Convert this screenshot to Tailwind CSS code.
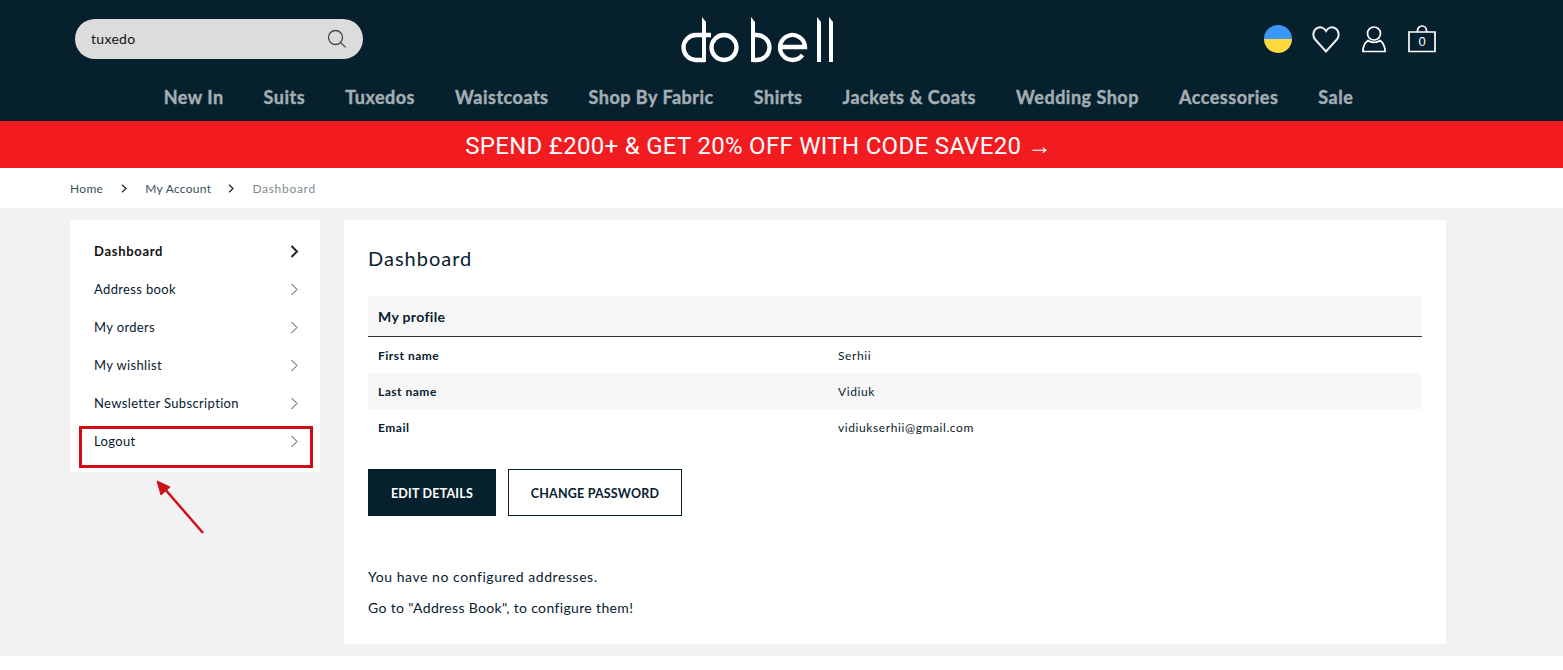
<!DOCTYPE html>
<html lang="en">
<head>
  <meta charset="UTF-8" />
  <meta name="viewport" content="width=device-width, initial-scale=1.0" />
  <title>Dashboard - Dobell</title>
  <script src="https://cdn.jsdelivr.net/npm/@tailwindcss/browser@4"></script>
</head>
<body class="bg-white text-[#07202e] font-['Lato',sans-serif] overflow-hidden">
  <div class="relative h-[670px]">
    <!-- header -->
    <header class="bg-[#07202e] h-[121px] relative">
      <div class="flex items-start justify-between pl-[75px] pr-[127px] pt-[19px] h-[86px]">
        <div class="w-[288px] h-10 rounded-full bg-[#dcdcdc] flex items-center justify-between pl-4 pr-4">
          <span class="text-[14px] leading-[18px] text-[#111] tracking-[0.3px]">tuxedo</span>
          <svg class="w-[20px] h-[20px]" viewBox="0 0 20 20" fill="none" stroke="#444" stroke-width="1.3"><circle cx="8.5" cy="8.5" r="7"/><path d="M13.6 13.6 18.6 18.4"/></svg>
        </div>
        <div class="flex items-center gap-5 h-10">
          <div class="w-7 h-7 rounded-full overflow-hidden flex flex-col">
            <div class="h-[14px] bg-[#3b97f7]"></div>
            <div class="h-[14px] bg-[#ffd83d]"></div>
          </div>
          <svg class="w-7 h-7" viewBox="0 0 28 28" fill="none" stroke="#eef1f2" stroke-width="2"><path d="M14 26.5 3.2 14.5C.2 11 1 5.5 5 3.2c3.3-1.8 7-.6 9 2.8 2-3.4 5.700-4.600 9-2.800 4 2.300 4.800 7.800 1.800 11.300Z"/></svg>
          <svg class="w-7 h-7" viewBox="0 0 24 28" fill="none" stroke="#fff" stroke-width="1.700"><circle cx="12" cy="8.500" r="6.500"/><path d="M6 15.500C3 17.500 1 22 .9 26.500h22.200C23 22 21 17.500 18 15.500c-3 2.500-9 2.500-12 0Z"/></svg>
          <div class="relative w-7 h-7">
            <svg class="w-7 h-7" viewBox="0 0 28 28" fill="none" stroke="#fff" stroke-width="1.700"><path d="M1 7h26v19.500H1Z"/><path d="M9.500 7V5.500a4.500 4.500 0 0 1 9 0V7"/></svg>
            <span class="absolute inset-0 pt-[9px] text-center text-[13px] leading-[16px] text-white font-['Liberation_Sans',sans-serif]">0</span>
          </div>
        </div>
      </div>
      <svg class="absolute left-[660px] top-0 w-[200px] h-[80px]" viewBox="660 0 200 80" fill="none" stroke="#fff" stroke-width="4.300">
        <path d="M711 35H696a12.500 12.500 0 0 0 0 25H705"/>
        <path d="M702 17 706 22V62H702Z" fill="#fff" stroke="none"/>
        <circle cx="724" cy="47.500" r="12.500"/>
        <path d="M751 17 755 22V62H751Z" fill="#fff" stroke="none"/>
        <path d="M753 35H757a12.500 12.500 0 0 1 0 25H753"/>
        <path d="M780 47h25a12.500 12.500 0 1 0-2.500 8"/>
        <path d="M817 17 821 22V62H817Z" fill="#fff" stroke="none"/>
        <path d="M829 17 833 22V62H829Z" fill="#fff" stroke="none"/>
      </svg>
      <nav class="flex justify-center gap-10 pr-[46px] text-[18px] leading-[22px] font-bold tracking-[0.5px] text-[#a3aeb3] [-webkit-text-stroke:0.4px_#a3aeb3]">
        <a>New In</a>
        <a>Suits</a>
        <a>Tuxedos</a>
        <a>Waistcoats</a>
        <a>Shop By Fabric</a>
        <a>Shirts</a>
        <a>Jackets &amp; Coats</a>
        <a>Wedding Shop</a>
        <a>Accessories</a>
        <a>Sale</a>
      </nav>
    </header>

    <!-- promo banner -->
    <div class="bg-[#f21c20] h-[47px] pt-[2px] flex items-center justify-center pr-[46px] text-white text-[24px] tracking-[0.3px] font-['Roboto',sans-serif]">SPEND £200+ &amp; GET 20% OFF WITH CODE SAVE20 →</div>

    <!-- breadcrumb -->
    <div class="h-10 flex items-center pl-[70px] text-[12px] tracking-[0.3px] text-[#3c4f5a]">
      <span class="pt-[2px]">Home</span>
      <svg class="w-[6px] h-[9px] ml-[18px] mr-[18px]" viewBox="0 0 6 9" fill="none" stroke="#222" stroke-width="1.200"><path d="M1 .8 5 4.500 1 8.200"/></svg>
      <span class="pt-[2px]">My Account</span>
      <svg class="w-[6px] h-[9px] ml-[17px] mr-[18px]" viewBox="0 0 6 9" fill="none" stroke="#222" stroke-width="1.200"><path d="M1 .8 5 4.500 1 8.200"/></svg>
      <span class="pt-[2px] tracking-[0.7px] text-[#7f8a90]">Dashboard</span>
    </div>

    <!-- account area -->
    <main class="bg-[#f2f2f2] h-[448px] pt-3 pl-[70px] flex items-start gap-6">
      <aside class="bg-white w-[250px] h-[252px] pt-3 pl-6 pr-[21px] text-[13px] tracking-[0.35px]">
        <a class="h-[38px] flex items-center justify-between font-bold tracking-[0.7px] text-[#111]"><span class="pt-[2px]">Dashboard</span>
          <svg class="w-[9px] h-[13px]" viewBox="0 0 9 13" fill="none" stroke="#222" stroke-width="2"><path d="M1.500 1 7 6.500 1.500 12"/></svg>
        </a>
        <a class="h-[38px] flex items-center justify-between"><span class="pt-[2px]">Address book</span>
          <svg class="w-[9px] h-[13px]" viewBox="0 0 9 13" fill="none" stroke="#444" stroke-width="1"><path d="M1.500 1 7 6.500 1.500 12"/></svg>
        </a>
        <a class="h-[38px] flex items-center justify-between"><span class="pt-[2px]">My orders</span>
          <svg class="w-[9px] h-[13px]" viewBox="0 0 9 13" fill="none" stroke="#444" stroke-width="1"><path d="M1.500 1 7 6.500 1.500 12"/></svg>
        </a>
        <a class="h-[38px] flex items-center justify-between"><span class="pt-[2px]">My wishlist</span>
          <svg class="w-[9px] h-[13px]" viewBox="0 0 9 13" fill="none" stroke="#444" stroke-width="1"><path d="M1.500 1 7 6.500 1.500 12"/></svg>
        </a>
        <a class="h-[38px] flex items-center justify-between"><span class="pt-[2px]">Newsletter Subscription</span>
          <svg class="w-[9px] h-[13px]" viewBox="0 0 9 13" fill="none" stroke="#444" stroke-width="1"><path d="M1.500 1 7 6.500 1.500 12"/></svg>
        </a>
        <a class="h-[38px] flex items-center justify-between"><span class="pt-[2px]">Logout</span>
          <svg class="w-[9px] h-[13px]" viewBox="0 0 9 13" fill="none" stroke="#444" stroke-width="1"><path d="M1.500 1 7 6.500 1.500 12"/></svg>
        </a>
      </aside>

      <section class="bg-white w-[1102px] h-[424px] px-6 pt-6">
        <h1 class="text-[20px] leading-[28px] tracking-[1px]">Dashboard</h1>
        <div class="mt-6 h-[41px] bg-[#f7f7f7] border-b border-[#333] flex items-center pl-[10px] text-[14px] font-bold tracking-[0.35px]">My profile</div>
        <div class="text-[12px] tracking-[0.6px]">
          <div class="h-9 pt-[2px] grid grid-cols-[470px_1fr] items-center pl-[10px]">
            <span class="font-bold tracking-[0.5px]">First name</span><span class="-ml-[10px]">Serhii</span>
          </div>
          <div class="h-9 pt-[2px] grid grid-cols-[470px_1fr] items-center pl-[10px] bg-[#f7f7f7]">
            <span class="font-bold tracking-[0.5px]">Last name</span><span class="-ml-[10px]">Vidiuk</span>
          </div>
          <div class="h-9 pt-[2px] grid grid-cols-[470px_1fr] items-center pl-[10px]">
            <span class="font-bold tracking-[0.5px]">Email</span><span class="-ml-[10px]">vidiukserhii@gmail.com</span>
          </div>
        </div>
        <div class="mt-6 flex gap-3 text-[12.5px] font-bold tracking-[0.2px]">
          <a class="w-[128px] h-[47px] pt-1 bg-[#07202e] text-white flex items-center justify-center">EDIT DETAILS</a>
          <a class="w-[174px] h-[47px] pt-1 border border-[#07202e] flex items-center justify-center">CHANGE PASSWORD</a>
        </div>
        <p class="mt-[51px] text-[14px] leading-[20px] tracking-[0.55px]">You have no configured addresses.</p>
        <p class="mt-[11px] text-[14px] leading-[20px] tracking-[0.35px]">Go to "Address Book", to configure them!</p>
      </section>
    </main>

    <!-- annotation over the page -->
    <div class="absolute left-[79px] top-[426px] w-[234px] h-[42px] border-[3px] border-[#d40a14]"></div>
    <svg class="absolute left-[150px] top-[475px] w-[60px] h-[65px]" viewBox="150 475 60 65" fill="none">
      <path d="M203 533 164 488" stroke="#d01018" stroke-width="2.500"/>
      <path d="M157 481 170 487 161 495Z" fill="#d01018" stroke="#d01018"/>
    </svg>
  </div>
</body>
</html>
